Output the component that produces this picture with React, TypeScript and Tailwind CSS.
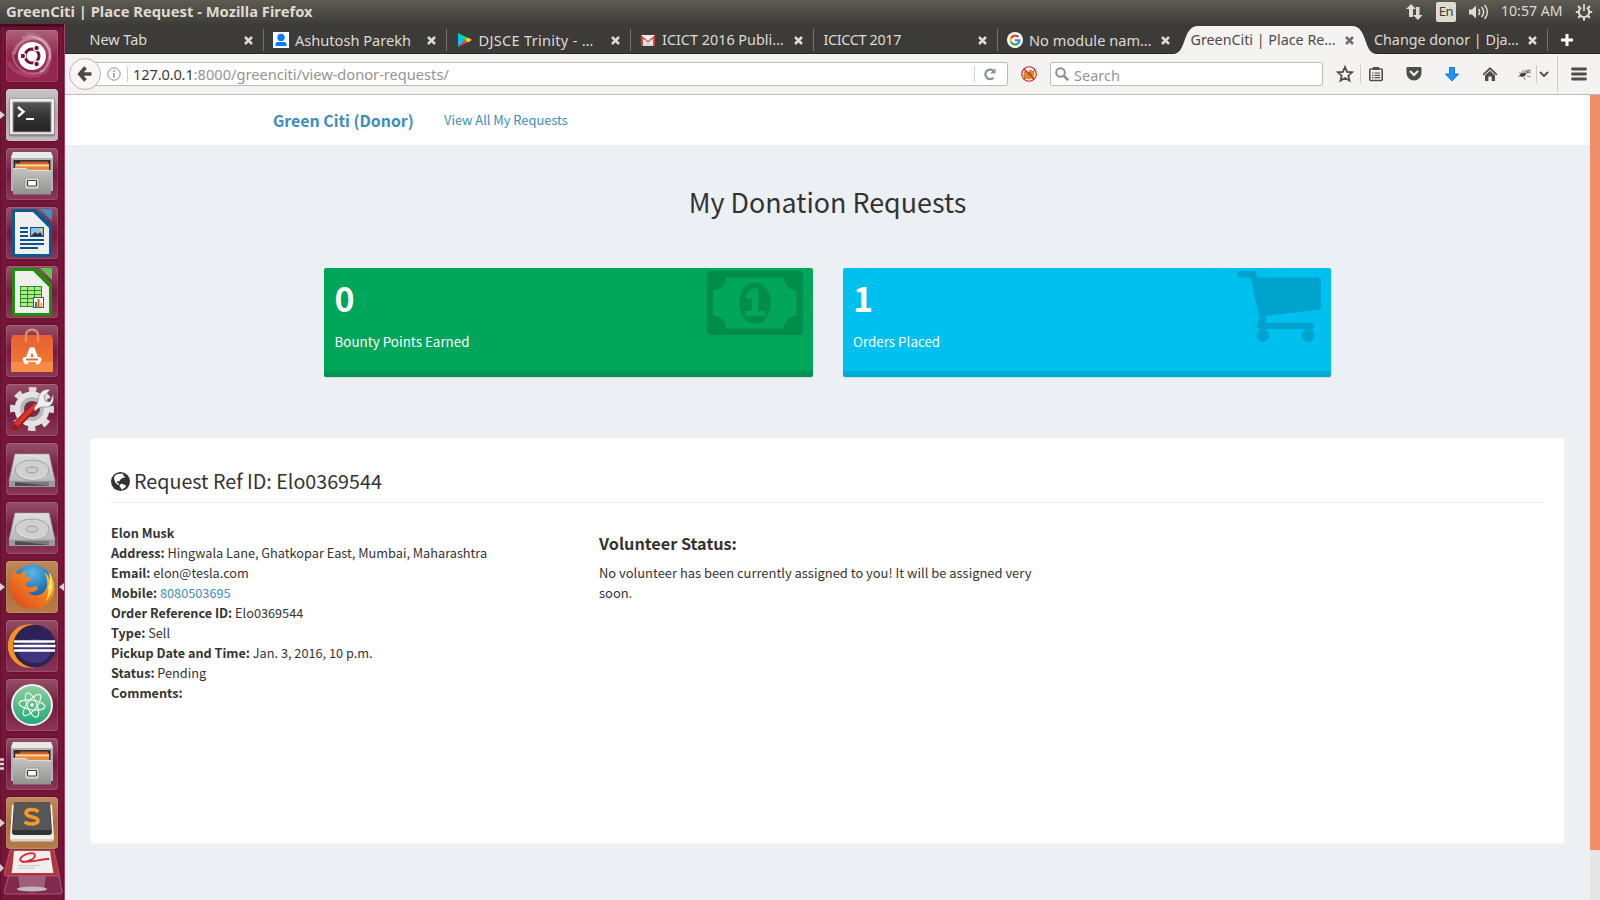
import type { ReactNode } from "react";

const UI = "font-['Noto_Sans',sans-serif]";
const PAGE = "font-['Noto_Sans_CJK_JP','Noto_Sans_CJK_SC',sans-serif]";

/* ---------- launcher icons (52x52 tiles) ---------- */

const UbuntuIcon = () => (
  <svg viewBox="0 0 52 52" className="h-full w-full">
    <g fill="none" stroke="#fff">
      <path d="M8 24C12 6 36 2 43 18c3 8-1 20-9 24" strokeOpacity=".3" strokeWidth="3" />
      <path d="M16 8c14-6 30 6 28 22M7 22c-2 14 14 28 32 18" strokeOpacity=".25" strokeWidth="2" />
      <path d="M20 4c20 0 30 22 18 40M2 32c8 14 26 18 40 8" strokeOpacity=".12" strokeWidth="4" />
    </g>
    <circle cx="26" cy="26" r="14" fill="#fff" />
    <circle cx="26" cy="26" r="7" fill="none" stroke="#74153b" strokeWidth="3" />
    <g stroke="#fff" strokeWidth="1.2" fill="#74153b">
      <circle cx="16.8" cy="26" r="2.8" />
      <circle cx="30.6" cy="18" r="2.8" />
      <circle cx="30.6" cy="34" r="2.8" />
    </g>
  </svg>
);

const TerminalIcon = () => (
  <svg viewBox="0 0 52 52" className="h-full w-full">
    <defs>
      <linearGradient id="term" x1="0" y1="0" x2="0" y2="1">
        <stop offset="0" stopColor="#555553" />
        <stop offset=".5" stopColor="#333" />
        <stop offset="1" stopColor="#232323" />
      </linearGradient>
    </defs>
    <rect x="3" y="9.500" width="46" height="38" rx="2" fill="#8f8c8e" />
    <rect x="4" y="10" width="44" height="35" rx="1" fill="#f1f0f0" />
    <rect x="6.500" y="12.500" width="39" height="31" fill="#999" />
    <rect x="7.500" y="13.500" width="37" height="29" fill="url(#term)" />
    <path d="M12 18l5.500 4.800-5.500 4.800" fill="none" stroke="#fff" strokeWidth="2.400" />
    <path d="M20 30h8" stroke="#fff" strokeWidth="2.200" />
  </svg>
);

const FilesIcon = () => (
  <svg viewBox="0 0 52 52" className="h-full w-full">
    <defs>
      <linearGradient id="cab" x1="0" y1="0" x2="0" y2="1">
        <stop offset="0" stopColor="#c4c4c2" />
        <stop offset="1" stopColor="#91918f" />
      </linearGradient>
    </defs>
    <path d="M7 4h38l2 5v34H5V9z" fill="#b3b3b1" />
    <path d="M7 4h38l2 6H5z" fill="#e9e9e8" />
    <path d="M7.500 12h37V24h-37z" fill="#33302f" />
    <path d="M14 13.500h28v9H14z" fill="#c4532c" />
    <path d="M9 15.500h34v8H9z" fill="#e58a42" />
    <path d="M10 17.500h33" stroke="#ffe1a6" strokeWidth="1.500" />
    <path d="M7 20h13l2 2h23v24.500H7z" fill="url(#cab)" />
    <path d="M7.500 20.500h12.500l2 2h23" fill="none" stroke="#dededc" />
    <rect x="19" y="30" width="14" height="11" rx="2" fill="#d8d8d6" stroke="#9a9a98" strokeWidth=".8" />
    <rect x="21.500" y="32.500" width="9" height="5.500" rx=".8" fill="#f8f8f8" stroke="#444" strokeWidth="1.200" />
  </svg>
);

const DocShape = ({ edge, corner, children }: { edge: string; corner: string; children: ReactNode }) => (
  <svg viewBox="0 0 52 52" className="h-full w-full">
    <path d="M8 2h22l16 16v30a2 2 0 0 1-2 2H8a2 2 0 0 1-2-2V4a2 2 0 0 1 2-2z" fill={edge} />
    <path d="M9 5h18l16 16v26H9z" fill="#efefee" />
    <path d="M34 2h10a2 2 0 0 1 2 2v10z" fill={corner} />
    {children}
  </svg>
);

const WriterIcon = () => (
  <DocShape edge="#0b5a92" corner="#3f90c4">
    <path d="M14 21h8M14 25h8M14 29h8M14 33h24M14 37h24M14 41h18" stroke="#0c5488" strokeWidth="2" />
    <rect x="24.500" y="20.500" width="13" height="9" fill="#8fc3e6" stroke="#0c5488" />
    <path d="M25 29l4-4 3 2 2-2 3 4z" fill="#333" />
    <circle cx="35" cy="22.500" r="1.200" fill="#f5d33b" />
  </DocShape>
);

const CalcIcon = () => (
  <DocShape edge="#1f8e0c" corner="#5fc84a">
    <rect x="14" y="20" width="22" height="21" fill="#2a8f17" />
    <g fill="#a9ee8a">
      {[21, 25, 29, 33, 37].map((y) =>
        [15, 22, 29].map((x) => <rect key={`${x}-${y}`} x={x} y={y} width="6" height="3" />),
      )}
    </g>
    <rect x="27.500" y="31.500" width="10" height="10" fill="#fff" stroke="#555" />
    <path d="M30 41v-5" stroke="#3878b8" strokeWidth="2" />
    <path d="M32.500 41v-8" stroke="#e2581b" strokeWidth="2" />
    <path d="M35.300 41v-4" stroke="#f0b51d" strokeWidth="2" />
  </DocShape>
);

const SoftwareIcon = () => (
  <svg viewBox="0 0 52 52" className="h-full w-full">
    <defs>
      <linearGradient id="bag" x1="0" y1="0" x2="0" y2="1">
        <stop offset="0" stopColor="#e66131" />
        <stop offset="1" stopColor="#f07c35" />
      </linearGradient>
    </defs>
    <path d="M5 14l2-4h38l2 4v33H5z" fill="url(#bag)" />
    <path d="M5 37h42v10H5z" fill="#ff9a52" fillOpacity=".6" />
    <path d="M20 17v-7c0-7 12-7 12 0v7" fill="none" stroke="#e88a68" strokeWidth="2.500" />
    <path d="M19.500 39L25 24.500h2L32.500 39" fill="none" stroke="#fff" strokeWidth="4" />
    <path d="M19 34.500h14" stroke="#fff" strokeWidth="5" strokeLinecap="round" />
    <path d="M20 34.500h12" stroke="#ea6a2d" strokeWidth="1.800" />
  </svg>
);

const SettingsIcon = () => (
  <svg viewBox="0 0 52 52" className="h-full w-full">
    <circle cx="26" cy="25" r="19.500" fill="none" stroke="#dcdcdc" strokeWidth="5" strokeDasharray="7.500 7.815" strokeDashoffset="3.700" />
    <circle cx="26" cy="25" r="17.500" fill="#e4e4e4" />
    <circle cx="26" cy="25" r="12" fill="#b9b9bb" />
    <circle cx="26" cy="25" r="8" fill="#70324b" />
    <path d="M9 42.500L29 22" stroke="#a51414" strokeWidth="7.500" strokeLinecap="round" />
    <path d="M9.500 41.500L29 21.500" stroke="#d8372f" strokeWidth="4.500" strokeLinecap="round" />
    <path d="M28 24c3-4 4-5 4-9 1-7 7-11 12-9l-6 6 1 5 5 1 3-7c2 8-3 13-9 12-4 0-6 1-9 4z" fill="#efefef" stroke="#888" strokeWidth=".8" />
    <circle cx="9.500" cy="42" r="1.500" fill="#7a1010" />
  </svg>
);

const DriveIcon = () => (
  <svg viewBox="0 0 52 52" className="h-full w-full">
    <defs>
      <linearGradient id="drv" x1="0" y1="0" x2="0" y2="1">
        <stop offset="0" stopColor="#dedede" />
        <stop offset="1" stopColor="#b9b9b9" />
      </linearGradient>
    </defs>
    <path d="M9 11h34l6 27H3z" fill="url(#drv)" stroke="#a3a3a3" strokeWidth=".6" />
    <path d="M3 38h46v6H3z" fill="#9b9b9b" />
    <path d="M9 39h34v4H9z" fill="#4c4c4c" />
    <path d="M9 39h34v4z" fill="#7a7a7a" />
    <ellipse cx="26" cy="27" rx="17" ry="10" fill="#d0d0d0" stroke="#a5a5a5" />
    <ellipse cx="26" cy="27" rx="6" ry="3" fill="#ccc" stroke="#9a9a9a" />
    <path d="M15 13c8-2 20 0 25 5M12 29c4 8 20 10 28 3" fill="none" stroke="#e8e8e8" />
  </svg>
);

const FirefoxIcon = () => (
  <svg viewBox="0 0 52 52" className="h-full w-full">
    <defs>
      <radialGradient id="sea" cx=".5" cy=".2" r=".8">
        <stop offset="0" stopColor="#5cb8e6" />
        <stop offset=".6" stopColor="#1f6fb8" />
        <stop offset="1" stopColor="#123a7c" />
      </radialGradient>
      <linearGradient id="fox" x1="1" y1="0" x2="0" y2="1">
        <stop offset="0" stopColor="#ffe14a" />
        <stop offset=".4" stopColor="#f58220" />
        <stop offset="1" stopColor="#d8401b" />
      </linearGradient>
    </defs>
    <circle cx="26.500" cy="24" r="20.500" fill="url(#sea)" />
    <path d="M8 9c1 3 3 4 6 4 3-2 5-3 7-3-2 2-2 4-1 6l5 1c1 2-3 3-5 5 0 3 2 5 6 4 3-1 5-1 6 1-2 4-6 5-10 4 5 6 17 4 19-6 1-6-1-10-3-14 3 2 5 5 6 8 0-3-1-6-2-8 5 5 7 13 6 20C46 41 37 48 27 48 13 48 4 38 4 26c0-6 1-13 4-17z" fill="url(#fox)" />
    <path d="M44 12c4 10 3 21-4 28 2-6 3-10 2-14 2-4 2-8 2-14z" fill="#ffe557" />
  </svg>
);

const EclipseIcon = () => (
  <svg viewBox="0 0 52 52" className="h-full w-full">
    <circle cx="23.500" cy="26" r="21.800" fill="#f59120" />
    <circle cx="28.500" cy="26" r="21.300" fill="#2c2255" />
    <ellipse cx="28.500" cy="31" rx="16" ry="12" fill="#41357f" />
    <path d="M8 21.500h41M7.500 26h42M8 30.500h41" stroke="#fff" strokeWidth="2.300" />
  </svg>
);

const AtomIcon = () => (
  <svg viewBox="0 0 52 52" className="h-full w-full">
    <defs>
      <linearGradient id="atom" x1="0" y1="0" x2="0" y2="1">
        <stop offset="0" stopColor="#8fd19c" />
        <stop offset="1" stopColor="#20a877" />
      </linearGradient>
    </defs>
    <circle cx="26" cy="26" r="20" fill="url(#atom)" stroke="#f0f2f0" strokeWidth="2" />
    <g fill="none" stroke="#eefaf2" strokeWidth="1.200">
      <ellipse cx="26" cy="26" rx="13" ry="4.800" transform="rotate(8 26 26)" />
      <ellipse cx="26" cy="26" rx="13" ry="4.800" transform="rotate(68 26 26)" />
      <ellipse cx="26" cy="26" rx="13" ry="4.800" transform="rotate(128 26 26)" />
    </g>
    <circle cx="26" cy="26" r="1.800" fill="#fff" />
  </svg>
);

const SublimeIcon = () => (
  <svg viewBox="0 0 52 52" className="h-full w-full">
    <path d="M6 8h40l2 33a3 3 0 0 1-3 3H7a3 3 0 0 1-3-3z" fill="#f1efec" />
    <path d="M5 42h42v2.500H5z" fill="#d5d2ce" />
    <path d="M10 5h32a2 2 0 0 1 2 2l2 28a3 3 0 0 1-3 3H9a3 3 0 0 1-3-3L8 7a2 2 0 0 1 2-2z" fill="#333" />
    <path d="M10 5h32a2 2 0 0 1 2 2l1 26H7L8 7a2 2 0 0 1 2-2z" fill="#565656" />
    <path d="M32.500 14.500c-5-3-12.500-2.500-12.500 1.500 0 5 12 3 12 7.500 0 4-8.500 4.500-13.500 1.500" fill="none" stroke="#f8982b" strokeWidth="3.600" />
  </svg>
);

const StackedTrashIcon = () => (
  <svg viewBox="0 0 60 46" className="h-[46px] w-[60px]">
    <path d="M5 26h50l3 17a2 2 0 0 1-2 2H2a2 2 0 0 1-2-2z" fill="#84335a" fillOpacity=".7" stroke="#b27790" strokeWidth=".7" />
    <path d="M14 27h28l-2 14H16z" fill="#a26d80" fillOpacity=".8" />
    <ellipse cx="28" cy="40" rx="15" ry="2.500" fill="#c6b5bb" />
    <path d="M6 1h44l5 24a2 2 0 0 1-2 2H2a2 2 0 0 1-2-2z" fill="#b0343f" stroke="#cc6a74" strokeWidth=".7" />
    <path d="M10 2h36l3 20a1 1 0 0 1-1 2H9a1 1 0 0 1-1-2z" fill="#f1efee" />
    <path d="M16 12c0-7 14-10 15-6 1 4-12 9-14 6 8 3 19-2 28-2" fill="none" stroke="#d42a34" strokeWidth="1.800" />
    <path d="M14 16.500h22M14 19h16" stroke="#bbb" strokeWidth=".8" />
  </svg>
);

/* ---------- launcher ---------- */

type Tile = { icon: ReactNode; tone: string; left?: "arrow" | "pips"; right?: boolean };

const WINE = "bg-linear-to-b from-[#955069] via-[#74193f] to-[#8a3759]";
const TAN = "bg-linear-to-b from-[#c08a5c] via-[#a9703f] to-[#b57c46]";

const TILES: Tile[] = [
  { icon: <UbuntuIcon />, tone: "bg-linear-to-b from-[#ad6078] via-[#94244c] to-[#97274f]" },
  { icon: <TerminalIcon />, tone: "bg-linear-to-b from-[#cbc5c7] via-[#aba3a6] to-[#c2babd]", left: "arrow" },
  { icon: <FilesIcon />, tone: WINE },
  { icon: <WriterIcon />, tone: WINE },
  { icon: <CalcIcon />, tone: WINE },
  { icon: <SoftwareIcon />, tone: WINE },
  { icon: <SettingsIcon />, tone: WINE },
  { icon: <DriveIcon />, tone: WINE },
  { icon: <DriveIcon />, tone: WINE },
  { icon: <FirefoxIcon />, tone: TAN, left: "arrow", right: true },
  { icon: <EclipseIcon />, tone: WINE },
  { icon: <AtomIcon />, tone: WINE },
  { icon: <FilesIcon />, tone: WINE, left: "pips" },
  { icon: <SublimeIcon />, tone: TAN, left: "arrow" },
];

const LeftMark = ({ kind }: { kind?: "arrow" | "pips" }) => (
  <svg viewBox="0 0 6 12" className="h-3 w-1.5 shrink-0">
    {kind === "arrow" && <path d="M0 2l5 4-5 4z" fill="#d9d2d5" />}
    {kind === "pips" && <path d="M0 1.500h4M0 6h4M0 10.500h4" stroke="#d9d2d5" strokeWidth="2.400" />}
  </svg>
);

const Launcher = () => (
  <div className="flex w-[65px] shrink-0 flex-col gap-[7px] border-r border-[#a8416c] bg-[#781639] pt-1.5 shadow-[inset_0_3px_3px_rgba(40,0,15,.6)]">
    {TILES.map((t, i) => (
      <div key={i} className="flex h-[52px] shrink-0 items-center">
        <LeftMark kind={t.left} />
        <div className={`h-[52px] w-[52px] shrink-0 overflow-hidden rounded-[4px] shadow-[inset_0_0_0_1px_rgba(255,255,255,.13),0_0_3px_rgba(40,0,15,.5)] ${t.tone}`}>{t.icon}</div>
        {t.right && (
          <svg viewBox="0 0 5 10" className="ml-px h-2.5 w-[5px]">
            <path d="M5 1v8L0 5z" fill="#d9d2d5" />
          </svg>
        )}
      </div>
    ))}
    <div className="-mt-[7px] flex items-start">
      <div className="w-1 pt-3.5">
        <svg viewBox="0 0 4 10" className="h-2.5 w-1"><path d="M0 1l4 4-4 4z" fill="#d9d2d5" /></svg>
      </div>
      <StackedTrashIcon />
    </div>
  </div>
);

/* ---------- top panel ---------- */

const TopPanel = () => (
  <div className={`flex h-6 shrink-0 items-center bg-linear-to-b from-[#5d5b52] to-[#3e3d39] pl-1.5 text-[#dfdbd2] ${UI}`}>
    <span className="flex-1 pb-0.5 text-[14.750px] leading-[22px] font-bold">GreenCiti | Place Request - Mozilla Firefox</span>
    <svg viewBox="0 0 18 18" className="mr-[13px] h-[18px] w-[18px]" fill="#dfdbd2">
      <path d="M6 1l5 5H8v8H4V6H1zM13 17l-5-5h3V4h3.500v8h3z" />
    </svg>
    <span className="mr-[12px] flex h-5 w-5 items-center justify-center rounded-[2px] bg-[#dfdbd2] text-[13px] tracking-tight text-[#3c3b37]">En</span>
    <svg viewBox="0 0 21 16" className="mr-[12px] h-4 w-[21px]" fill="none" stroke="#dfdbd2" strokeWidth="1.500">
      <path d="M1 5.500h3l4-4v13l-4-4H1z" fill="#dfdbd2" stroke="none" />
      <path d="M10.500 5c1.500 2 1.500 4 0 6M13.500 3c2.600 3 2.600 7 0 10M16.500 1c3.800 4 3.800 10 0 14" />
    </svg>
    <span className="mr-[13px] w-[61px] pb-0.5 text-[14.100px] leading-[22px] whitespace-nowrap">10:57 AM</span>
    <svg viewBox="0 0 18 18" className="mr-[7px] h-[18px] w-[18px]" fill="none" stroke="#dfdbd2">
      <path d="M6.200 4.600a5.200 5.200 0 1 0 5.600 0" strokeWidth="2" />
      <path d="M9 1v7" strokeWidth="1.800" />
      <path d="M9 14.500v3M3.800 9H.8M17.200 9h-3M5.300 12.700l-2.100 2.100M12.700 12.700l2.100 2.100M4.600 4.600L3 3M13.400 4.600L15 3" strokeWidth="2.200" />
    </svg>
  </div>
);

/* ---------- tab strip ---------- */

const CloseMark = ({ dark }: { dark?: boolean }) => (
  <svg viewBox="0 0 9 9" className="h-[9px] w-[9px] shrink-0" stroke={dark ? "#6e6d6a" : "#dedcd7"} strokeWidth="2.500">
    <path d="M1 1l7 7M8 1L1 8" />
  </svg>
);

const ContactFav = () => (
  <svg viewBox="0 0 16 16" className="h-4 w-4 shrink-0">
    <path d="M0 0h16v16H0z" fill="#fff" />
    <circle cx="8" cy="5.500" r="3.700" fill="#0a7cff" />
    <path d="M2.500 14v-2c0-1.500 1.500-2 3-2h5c1.500 0 3 .5 3 2v2z" fill="#0a7cff" />
  </svg>
);
const PlayFav = () => (
  <svg viewBox="0 0 16 16" className="h-4 w-4 shrink-0">
    <path d="M1 1v14l7-7z" fill="#00c3ff" />
    <path d="M1 1l10 5-3 3z" fill="#00e676" />
    <path d="M1 15l10-5-3-2.500z" fill="#ff3a44" />
    <path d="M11 5.500L15 8l-4 2.500L8 8z" fill="#ffc900" />
  </svg>
);
const GmailFav = () => (
  <svg viewBox="0 0 16 16" className="h-4 w-4 shrink-0">
    <path d="M1 3h14v11H1z" fill="#eee" />
    <path d="M3 14l5-5 5 5z" fill="#d6d6d6" />
    <path d="M1 14V3l7 6 7-6v11h-2V6.500l-5 4-5-4V14z" fill="#db4437" />
  </svg>
);
const GoogleFav = () => (
  <svg viewBox="0 0 16 16" className="h-4 w-4 shrink-0" fill="none" strokeWidth="2.200">
    <circle cx="8" cy="8" r="8" fill="#fff" />
    <path d="M4 6.200A4.500 4.500 0 0 1 11.300 4.900" stroke="#ea4335" />
    <path d="M4 6.200a4.600 4.600 0 0 0 0 3.800" stroke="#fbbc05" />
    <path d="M4 10a4.500 4.500 0 0 0 7 1.400" stroke="#34a853" />
    <path d="M8 8.300h4.500c0 1.300-.6 2.500-1.500 3.100" stroke="#4285f4" />
  </svg>
);

type TabDef = { label: string; cls: string; icon?: ReactNode; sep?: boolean; active?: boolean };

const TABS: TabDef[] = [
  { label: "New Tab", cls: "text-[14.400px]", sep: true },
  { label: "Ashutosh Parekh", cls: "text-[14.600px]", icon: <ContactFav />, sep: true },
  { label: "DJSCE Trinity - …", cls: "text-[14.600px] tracking-[0.28px]", icon: <PlayFav />, sep: true },
  { label: "ICICT 2016 Publi…", cls: "text-[14.400px]", icon: <GmailFav />, sep: true },
  { label: "ICICCT 2017", cls: "text-[14.400px] tracking-[-0.35px]", sep: true },
  { label: "No module nam…", cls: "text-[14.550px] tracking-[0.05px]", icon: <GoogleFav /> },
  { label: "GreenCiti | Place Re…", cls: "text-[14.300px]", active: true },
  { label: "Change donor | Dja…", cls: "text-[14.300px]", sep: true },
];

const TabStrip = () => (
  <div className="flex h-[30px] shrink-0 border-b border-[#2b2a27] bg-[#3c3b37] pl-[15px]">
    {TABS.map((t) => (
      <div key={t.label} className={`relative flex h-8 w-[183.500px] shrink-0 items-center pr-[11px] pl-[9.500px] ${t.active ? "text-[#4c4b48]" : "text-[#dedcd7]"}`}>
        {t.active && (
          <svg viewBox="0 0 204 28" className="absolute top-[2px] -left-[8.500px] h-7 w-[204px]">
            <path d="M0 28C14 28 9 0 25 0H179C195 0 190 28 204 28Z" fill="#f4f3f1" />
          </svg>
        )}
        {t.icon && <span className="mr-1.5">{t.icon}</span>}
        <span className={`relative flex-1 leading-8 whitespace-nowrap ${t.cls} ${UI}`}>{t.label}</span>
        <span className="relative"><CloseMark dark={t.active} /></span>
        {t.sep && <span className="absolute top-[5px] right-0 h-[22px] w-px bg-[#73726d]" />}
      </div>
    ))}
    <svg viewBox="0 0 14 14" className="mt-[9px] ml-3 h-3.5 w-3.5" stroke="#fff" strokeWidth="3">
      <path d="M7 1v12M1 7h12" />
    </svg>
  </div>
);

/* ---------- navigation toolbar ---------- */

const Bar = ({ cls }: { cls: string }) => <span className={`w-px shrink-0 bg-[#cfcdca] ${cls}`} />;

const Toolbar = () => (
  <div className="flex h-[41px] shrink-0 items-center border-b border-[#bdbbb7] bg-[#f4f3f1] pl-1">
    <div className="z-10 flex h-8 w-8 shrink-0 items-center justify-center rounded-full border border-[#b9b7b4] bg-[#f8f7f6]">
      <svg viewBox="0 0 16 16" className="h-4 w-4" fill="none" stroke="#4a4a48" strokeWidth="3.600">
        <path d="M8.500 1.500L2.800 8l5.700 6.500M3 8h11.500" />
      </svg>
    </div>
    <div className="-ml-2.5 flex h-6 w-[917px] shrink-0 items-center rounded-r-[2px] border border-[#bdbbb7] bg-white pl-[15px]">
      <svg viewBox="0 0 14 14" className="h-3.5 w-3.5 shrink-0" fill="none" stroke="#8d8d8d">
        <circle cx="7" cy="7" r="6.200" />
        <path d="M7 6v4.500M7 3.300v1.600" strokeWidth="1.500" />
      </svg>
      <Bar cls="ml-1.5 h-4" />
      <span className={`ml-[5px] flex-1 text-[14.640px] leading-[22px] text-[#949494] ${UI}`}>
        <span className="tracking-[-0.15px] text-[#3a3a3a]">127.0.0.1</span>:8000/greenciti/view-donor-requests/
      </span>
      <Bar cls="h-4" />
      <svg viewBox="0 0 14 14" className="mr-[10px] ml-[8.500px] h-3.5 w-3.5" fill="none" stroke="#8593a1" strokeWidth="2.200">
        <path d="M10.500 10.800A4.800 4.800 0 1 1 11 4.500" />
        <path d="M12.500 1.200v5.300H7.200z" fill="#8593a1" stroke="none" />
      </svg>
    </div>
    <svg viewBox="0 0 16 16" className="ml-[13px] h-4 w-4 shrink-0">
      <path d="M2 9l3-3.500 2 1L9 3.500l2.500 1 2 3-1 4-4 2-5-1z" fill="#e08a1c" />
      <path d="M3 7l2-3M12 6l2-2M4 11l-1 2M11 12l2 1M8 6l3 3" stroke="#8b5a14" />
      <circle cx="8" cy="8" r="7.300" fill="none" stroke="#cf2020" strokeWidth="1.100" />
      <path d="M3 3l10 10" stroke="#cf2020" strokeWidth="1.100" />
    </svg>
    <div className="ml-[13px] flex h-6 w-[273px] shrink-0 items-center rounded-[2px] border border-[#bdbbb7] bg-white pl-1">
      <svg viewBox="0 0 14 14" className="h-3.5 w-3.5" fill="none" stroke="#8f8f8f">
        <circle cx="5.500" cy="5.500" r="4.300" strokeWidth="2" />
        <path d="M8.700 8.700l4.500 4.500" strokeWidth="2.500" />
      </svg>
      <span className={`ml-[5px] pt-0.5 text-[14.500px] leading-[22px] text-[#949494] ${UI}`}>Search</span>
    </div>
    <div className="flex flex-1 items-center text-[#4d4d4b]">
      <svg viewBox="0 0 18 18" className="ml-[13px] h-[18px] w-[18px]" fill="none" stroke="currentColor" strokeWidth="1.800">
        <path d="M9 2l2.100 4.800 5 .5-3.800 3.400 1.200 5L9 13l-4.500 2.700 1.200-5L1.900 7.300l5-.5z" />
      </svg>
      <Bar cls="ml-1.5 h-[18px]" />
      <svg viewBox="0 0 16 16" className="ml-[7px] h-4 w-4" fill="none" stroke="currentColor" strokeWidth="1.600">
        <rect x="1.800" y="3" width="12.400" height="11.500" rx="1" />
        <path d="M5 2.500h6" strokeWidth="3" />
        <path d="M4 7h1.500M6.500 7H12M4 9.300h1.500M6.500 9.300H12M4 11.600h1.500M6.500 11.600H12" strokeWidth="1.200" />
      </svg>
      <svg viewBox="0 0 16 16" className="ml-[22px] h-4 w-4">
        <path d="M1.500 1h13a1 1 0 0 1 1 1v5a7.500 7.500 0 0 1-15 0V2a1 1 0 0 1 1-1z" fill="currentColor" />
        <path d="M4.500 5.500L8 9l3.500-3.500" fill="none" stroke="#f4f3f1" strokeWidth="2" strokeLinecap="round" />
      </svg>
      <svg viewBox="0 0 16 16" className="ml-[22px] h-4 w-4">
        <path d="M5.500 1.500h5V8h4L8 15 1.500 8h4z" fill="#1f93ff" stroke="#0f77dd" />
      </svg>
      <svg viewBox="0 0 16 16" className="ml-[22px] h-4 w-4">
        <path d="M8 1L.6 8.200l1.200 1.200L8 3.500l6.200 5.900 1.200-1.200z" fill="currentColor" />
        <path d="M3 9.500L8 4.800l5 4.700V15H9.600v-4.500H6.400V15H3z" fill="currentColor" />
      </svg>
      <svg viewBox="0 0 16 14" className="ml-[19px] h-3.5 w-4">
        <path d="M5 7l3-4 5-1 1 2-4 3-4 1z" fill="#a9a9a9" />
        <path d="M2 8l3-2 4 .5-1 2.500-3.500 1z" fill="#3a3a3a" />
        <path d="M2 5l3 2M7 10l1 3M10 9l4 1M1 10l2-1M6 3L5 6M12 3L8 7M9 5l5 1" stroke="#666" strokeWidth=".7" />
      </svg>
      <Bar cls="ml-[3px] h-[18px]" />
      <svg viewBox="0 0 10 8" className="ml-0.5 h-2 w-2.5" fill="none" stroke="currentColor" strokeWidth="1.800">
        <path d="M1 2l4 4 4-4" />
      </svg>
      <Bar cls="ml-2 h-9" />
      <svg viewBox="0 0 16 14" className="ml-[13px] h-3.5 w-4" stroke="currentColor" strokeWidth="2.800" strokeLinecap="round">
        <path d="M1.500 2h13M1.500 7h13M1.500 12h13" />
      </svg>
    </div>
  </div>
);

/* ---------- page ---------- */

const MoneyGlyph = () => (
  <svg viewBox="0 256 1920 1280" className="absolute top-[3px] right-2.5 h-16 w-24" fill="#000" fillOpacity=".15">
    <path d="M768 1152h384v-96h-128v-448h-114l-148 137 77 80q42-37 55-57h2v288h-128v96zm512-256q0 70-21 142t-59.500 134-101.500 101-138 39-138-39-101.500-101-59.500-134-21-142 21-142 59.500-134 101.500-101 138-39 138 39 101.500 101 59.500 134 21 142zm512 256v-512q-106 0-181-75t-75-181h-1152q0 106-75 181t-181 75v512q106 0 181 75t75 181h1152q0-106 75-181t181-75zm128-832v1152q0 26-19 45t-45 19h-1792q-26 0-45-19t-19-45v-1152q0-26 19-45t45-19h1792q26 0 45 19t19 45z" />
  </svg>
);

const CartGlyph = () => (
  <svg viewBox="64 256 1664 1408" className="absolute top-[3px] right-2.5 h-[71px] w-[84px]" fill="#000" fillOpacity=".15">
    <path d="M704 1536q0 52-38 90t-90 38-90-38-38-90 38-90 90-38 90 38 38 90zm896 0q0 52-38 90t-90 38-90-38-38-90 38-90 90-38 90 38 38 90zm128-1088v512q0 24-16.500 42.500t-40.500 21.500l-1044 122q13 60 13 70 0 16-24 64h920q26 0 45 19t19 45-19 45-45 19h-1024q-26 0-45-19t-19-45q0-11 8-31.500t16-36 21.500-40 15.500-29.500l-177-823h-204q-26 0-45-19t-19-45 19-45 45-19h256q16 0 28.500 6.500t19.500 15.500 13 24.500 8 26 5.500 29.500 4.500 26h1201q26 0 45 19t19 45z" />
  </svg>
);

const StatBox = ({ value, label, tone, glyph }: { value: string; label: string; tone: string; glyph: ReactNode }) => (
  <div className={`relative flex h-[109px] flex-col justify-between overflow-hidden rounded-[2px] text-white shadow-[0_1px_1px_rgba(0,0,0,.1)] ${tone}`}>
    <div className="px-[10.500px] pt-[9px]">
      <h3 className="text-[34px] leading-[42px] font-bold">{value}</h3>
      <p className="mt-[12px] text-[13.400px] leading-5">{label}</p>
    </div>
    {glyph}
    <div className="h-1.5 bg-black/10" />
  </div>
);

const GlobeGlyph = () => (
  <svg viewBox="0 0 19 19" className="h-[19px] w-[19px] shrink-0">
    <circle cx="9.500" cy="9.500" r="9.500" fill="#333" />
    <path d="M7 1.800l2 .2 1.500-.6 2 .8-.5 1.600 1.500.2.200 2-1.800-.4-1.200 1.200-1.700 1-.6 1.600-1.200-.4-1.200.6.400 1.600 1.400.400.400 1.600 1.600.200-1 .2-2.400-1.200-2-2-1-2.400L3 5.500 4 3.600z" fill="#fff" />
    <path d="M9 12.500l2-.7 2.200 1 1.800.7-.8 2-1.800 1-1.700 1.200-.900-1.900-1.200-1.400z" fill="#fff" />
  </svg>
);

const DETAILS: { k: string; v?: string; link?: boolean }[] = [
  { k: "Elon Musk" },
  { k: "Address:", v: "Hingwala Lane, Ghatkopar East, Mumbai, Maharashtra" },
  { k: "Email:", v: "elon@tesla.com" },
  { k: "Mobile:", v: "8080503695", link: true },
  { k: "Order Reference ID:", v: "Elo0369544" },
  { k: "Type:", v: "Sell" },
  { k: "Pickup Date and Time:", v: "Jan. 3, 2016, 10 p.m." },
  { k: "Status:", v: "Pending" },
  { k: "Comments:" },
];

const Page = () => (
  <div className={`flex min-h-0 flex-1 ${PAGE}`}>
    <div className="flex min-w-0 flex-1 flex-col bg-[#ecf0f5] text-[#333]">
      <nav className="flex h-[50px] shrink-0 items-center bg-white pl-[208px] text-[#3c8dbc]">
        <a className="w-[171px] pt-0.5 text-[15.850px] font-bold">Green Citi (Donor)</a>
        <a className="text-[12.870px]">View All My Requests</a>
      </nav>
      <h1 className="mt-[40px] text-center text-[26.850px] leading-[33px]">My Donation Requests</h1>
      <div className="mt-[50px] grid grid-cols-2 gap-[30px] pr-[259px] pl-[259px]">
        <StatBox value="0" label="Bounty Points Earned" tone="bg-[#00a65a]" glyph={<MoneyGlyph />} />
        <StatBox value="1" label="Orders Placed" tone="bg-[#00c0ef]" glyph={<CartGlyph />} />
      </div>
      <section className="mx-[25px] mt-[61px] h-[406px] shrink-0 border border-[#f4f4f4] bg-white px-5 pt-[30px]">
        <h2 className="flex h-[34px] items-start gap-1 border-b border-[#eee] text-[19.720px] leading-6">
          <span className="pt-[3px]"><GlobeGlyph /></span>
          Request Ref ID: Elo0369544
        </h2>
        <div className="flex pt-5 text-[12.720px] leading-5">
          <div className="w-[488px]">
            {DETAILS.map((d) => (
              <div key={d.k}>
                <b className="text-[12.650px]">{d.k}</b> {d.v && <span className={d.link ? "text-[#3c8dbc]" : ""}>{d.v}</span>}
              </div>
            ))}
          </div>
          <div className="w-[458px] pt-[10px]">
            <h4 className="text-[16.260px] leading-5 font-bold">Volunteer Status:</h4>
            <p className="mt-2.5 text-[12.930px]">No volunteer has been currently assigned to you! It will be assigned very soon.</p>
          </div>
        </div>
      </section>
    </div>
    <div className="w-2.5 shrink-0 bg-[#e5e5e5]">
      <div className="h-[755px] bg-[#f18e69]" />
    </div>
  </div>
);

export default function App() {
  return (
    <div className="flex h-[900px] w-[1600px] flex-col overflow-hidden">
      <TopPanel />
      <div className="flex min-h-0 flex-1">
        <Launcher />
        <div className="flex min-w-0 flex-1 flex-col">
          <TabStrip />
          <Toolbar />
          <Page />
        </div>
      </div>
    </div>
  );
}
